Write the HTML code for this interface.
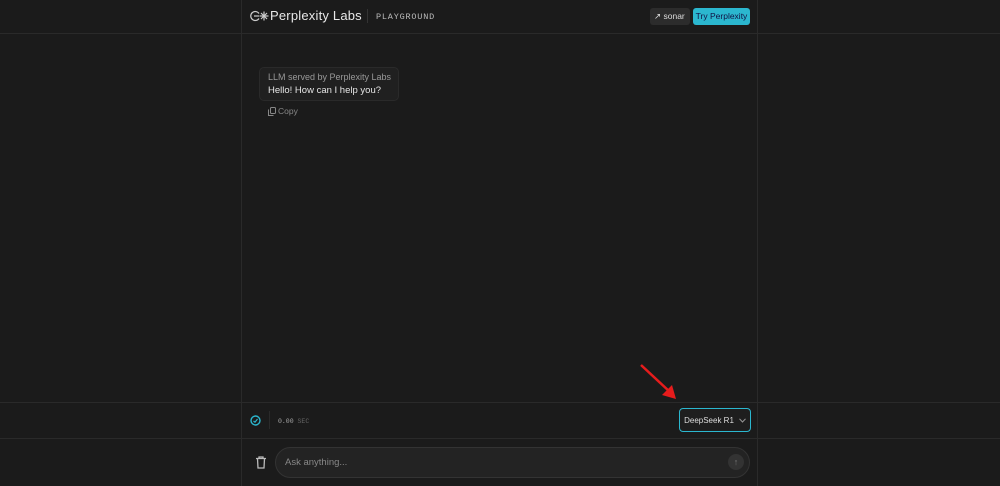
<!DOCTYPE html>
<html><head><style>
*{margin:0;padding:0;box-sizing:border-box}
body{width:1000px;height:486px;background:#1b1b1b;font-family:"Liberation Sans",sans-serif;position:relative;overflow:hidden;color:#ddd}
.abs{position:absolute}
</style></head><body>
<div class="abs" style="left:241px;top:0;width:1px;height:486px;background:#2a2a2a"></div>
<div class="abs" style="left:757px;top:0;width:1px;height:486px;background:#2a2a2a"></div>
<div class="abs" style="left:0;top:33px;width:1000px;height:1px;background:#2a2a2a"></div>
<div class="abs" style="left:0;top:402px;width:1000px;height:1px;background:#2a2a2a"></div>
<div class="abs" style="left:0;top:438px;width:1000px;height:1px;background:#2a2a2a"></div>
<svg class="abs" style="left:250px;top:10px" width="20" height="12" viewBox="0 0 20 12"><path d="M9 3.5A4.5 4.5 0 1 0 9 8.5" fill="none" stroke="#ccc" stroke-width="1.2"/><line x1="4" y1="6" x2="9" y2="6" stroke="#ccc" stroke-width="1.2"/><g stroke="#ccc" stroke-width="1.2"><line x1="14" y1="1.5" x2="14" y2="10.5"/><line x1="9.5" y1="6" x2="18.5" y2="6"/><line x1="11" y1="3" x2="17" y2="9"/><line x1="17" y1="3" x2="11" y2="9"/></g></svg>
<div class="abs" style="left:270px;top:8px;font-size:13px;color:#e8e8e8;letter-spacing:0.2px">Perplexity Labs</div>
<div class="abs" style="left:367px;top:9px;width:1px;height:14px;background:#333"></div>
<div class="abs" style="left:376px;top:12px;font-family:'Liberation Mono',monospace;font-size:8.5px;color:#bbb;letter-spacing:0.8px">PLAYGROUND</div>
<div class="abs" style="left:650px;top:8px;width:40px;height:17px;background:#2c2c2c;border-radius:3px;font-size:8.5px;color:#ddd;line-height:17px;padding-left:4px">&#8599; sonar</div>
<div class="abs" style="left:693px;top:8px;width:57px;height:17px;background:#2bb7cf;border-radius:3px;font-size:8.5px;color:#114;line-height:17px;text-align:center">Try Perplexity</div>
<div class="abs" style="left:259px;top:67px;width:140px;height:34px;background:#202020;border:1px solid #2a2a2a;border-radius:5px"></div>
<div class="abs" style="left:268px;top:72px;font-size:9px;color:#999">LLM served by Perplexity Labs</div>
<div class="abs" style="left:268px;top:85px;font-size:9.5px;color:#e5e5e5">Hello! How can I help you?</div>
<svg class="abs" style="left:268px;top:107px" width="8" height="9"><rect x="2.5" y="0.5" width="5" height="6" rx="1" fill="none" stroke="#888"/><path d="M0.5 2.5V8.5H5.5" fill="none" stroke="#888"/></svg>
<div class="abs" style="left:278px;top:106px;font-size:8.5px;color:#888">Copy</div>
<svg class="abs" style="left:250px;top:415px" width="11" height="11"><circle cx="5.5" cy="5.5" r="4.5" fill="none" stroke="#2bb7cf" stroke-width="1.4"/><path d="M3.5 6L5 7.2 7.5 4" fill="none" stroke="#2bb7cf" stroke-width="1.2"/></svg>
<div class="abs" style="left:269px;top:411px;width:1px;height:18px;background:#2a2a2a"></div>
<div class="abs" style="left:278px;top:418px;font-family:'Liberation Mono',monospace;font-size:6.5px;color:#aaa">0.00 <span style="color:#666">SEC</span></div>
<div class="abs" style="left:679px;top:408px;width:72px;height:24px;border:1.5px solid #2bb7cf;border-radius:4px;background:#1e1e1e;font-size:8px;color:#ddd;display:flex;align-items:center;justify-content:center;white-space:nowrap">DeepSeek R1<svg style="margin-left:5px" width="7" height="5"><path d="M0.5 0.8L3.5 4 6.5 0.8" fill="none" stroke="#999"/></svg></div>
<svg class="abs" style="left:638px;top:362px" width="42" height="40"><line x1="3" y1="3" x2="32" y2="30" stroke="#e61c1c" stroke-width="2.5"/><polygon points="38,37 24,33 34,23" fill="#e61c1c"/></svg>
<svg class="abs" style="left:255px;top:456px" width="12" height="13"><path d="M1 2.5H11M4 2.5V1H8V2.5M2.5 2.5L3 12H9L9.5 2.5" fill="none" stroke="#bbb" stroke-width="1.3"/></svg>
<div class="abs" style="left:275px;top:447px;width:475px;height:31px;background:#232323;border:1px solid #333;border-radius:16px"></div>
<div class="abs" style="left:285px;top:457px;font-size:9.5px;color:#888">Ask anything...</div>
<div class="abs" style="left:728px;top:454px;width:16px;height:16px;border-radius:50%;background:#333;color:#777;font-size:9px;text-align:center;line-height:16px">&#8593;</div>
</body></html>
